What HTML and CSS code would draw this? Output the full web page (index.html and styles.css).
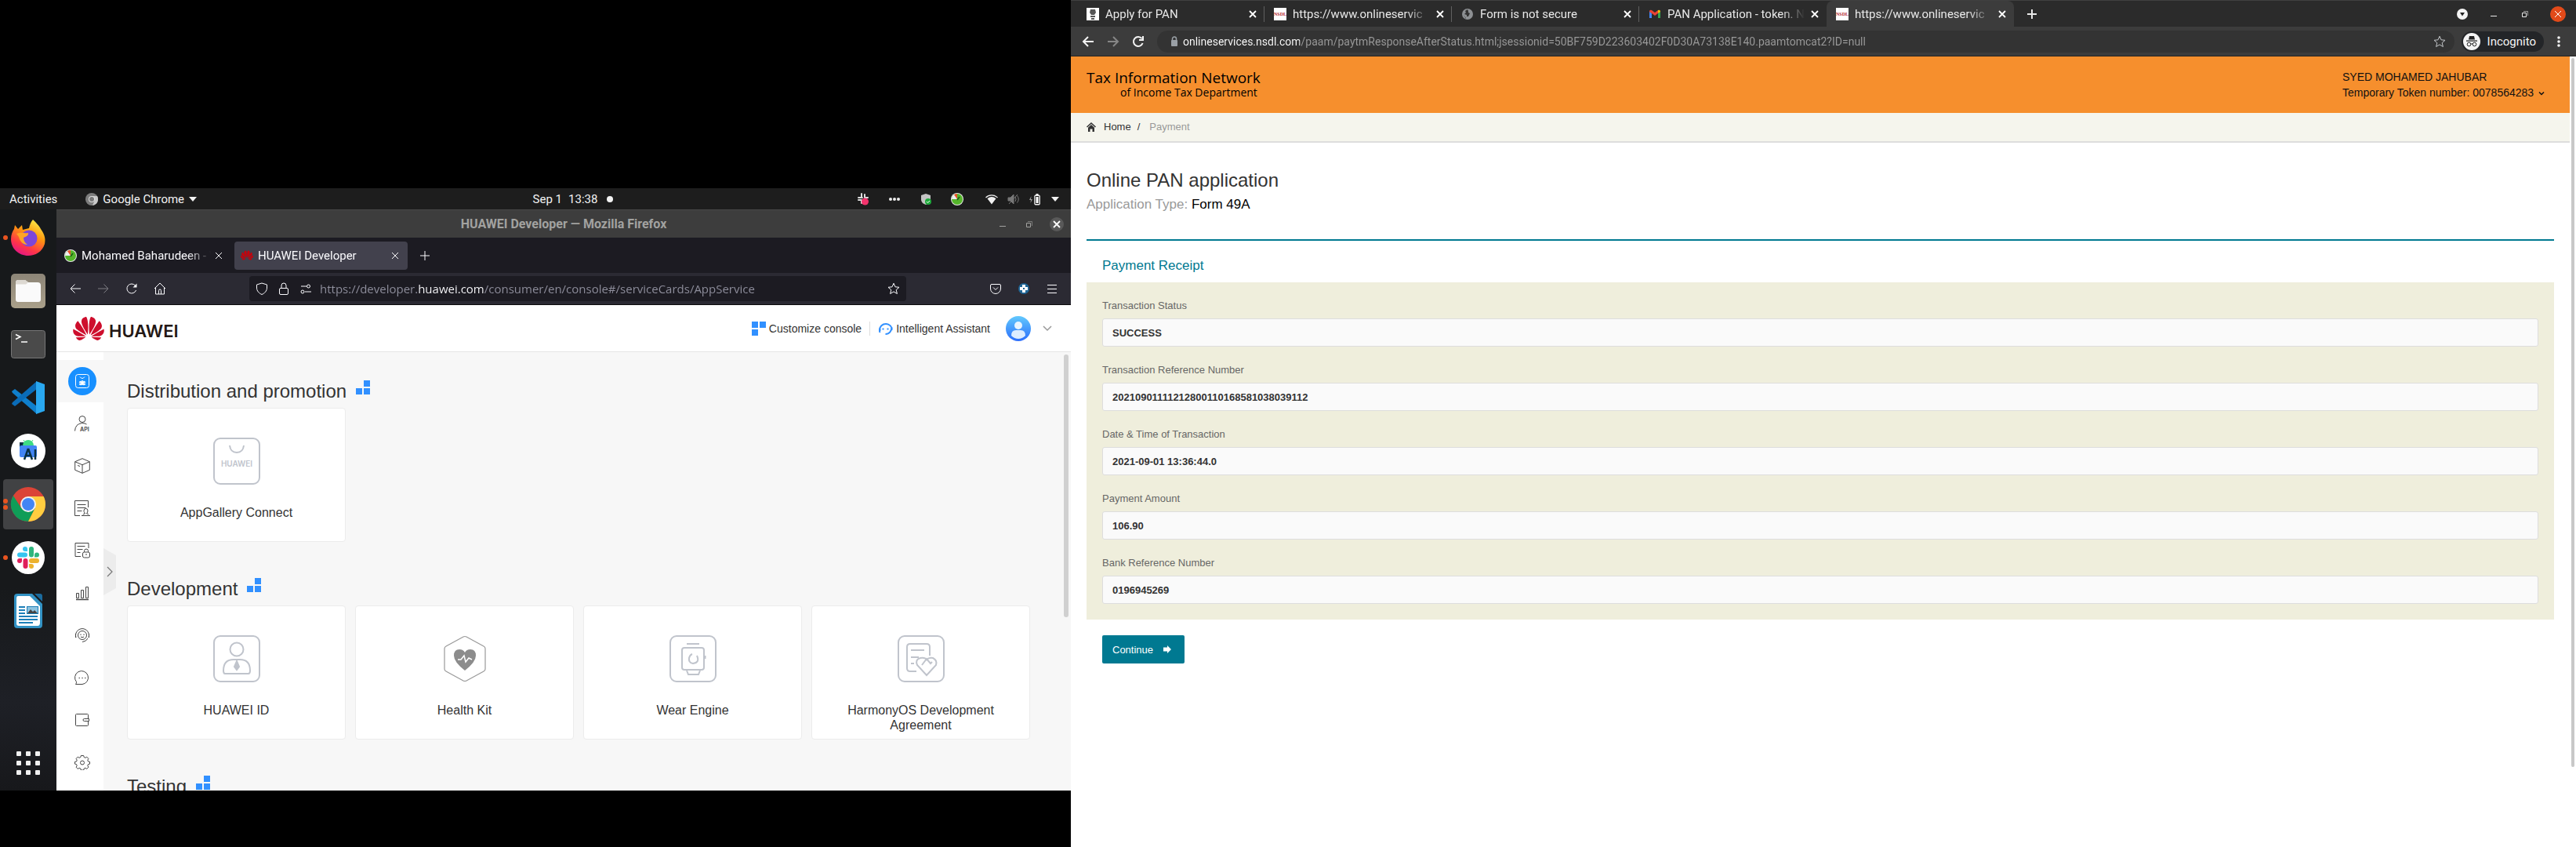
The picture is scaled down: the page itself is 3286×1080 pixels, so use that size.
FILE: index.html
```html
<!DOCTYPE html>
<html lang="en">
<head>
<meta charset="utf-8">
<title>Desktop workspace</title>
<link rel="stylesheet" href="styles.css">
</head>
<body>
<svg class="defs" aria-hidden="true">
  <defs>
    <linearGradient id="fox" x1="0.8" y1="0" x2="0.3" y2="1"><stop offset="0" stop-color="#fff44f"/><stop offset="0.4" stop-color="#ff980e"/><stop offset="0.75" stop-color="#ff3647"/><stop offset="1" stop-color="#e31587"/></linearGradient>
    <linearGradient id="files" x1="0" y1="0" x2="0" y2="1"><stop offset="0" stop-color="#8c8577"/><stop offset="1" stop-color="#aaa08a"/></linearGradient>
    <linearGradient id="avatar" x1="0" y1="0" x2="0" y2="1"><stop offset="0" stop-color="#62c9fd"/><stop offset="1" stop-color="#2b6dfb"/></linearGradient>
  </defs>
  <symbol id="i-huawei" viewBox="0 2.9 24 18.2"><path d="M3.67 6.14S1.82 7.91 1.72 9.78v.35c.08 1.51 1.22 2.4 1.22 2.4 1.83 1.79 6.26 4.04 7.3 4.55 0 0 .06.03.1-.01l.02-.04v-.04C7.52 10.8 3.67 6.14 3.67 6.14zM9.65 18.6c-.02-.08-.1-.08-.1-.08l-7.38.26c.8 1.43 2.15 2.53 3.56 2.2.96-.25 3.16-1.78 3.88-2.3.06-.05.04-.09.04-.09zm.08-.78C6.49 15.63.21 12.28.21 12.28c-.15.46-.2.9-.21 1.3v.07c0 1.07.4 1.82.4 1.82.8 1.69 2.34 2.2 2.34 2.2.7.3 1.4.31 1.4.31.12.02 4.4 0 5.54 0 .05 0 .08-.05.08-.05v-.06c0-.03-.03-.05-.03-.05zM9.06 3.19a3.42 3.42 0 00-2.57 3.15v.41c.03.6.16 1.05.16 1.05.66 2.9 3.86 7.65 4.55 8.65.05.05.1.03.1.03a.1.1 0 00.06-.1c1.06-10.6-1.11-13.42-1.11-13.42-.32.02-1.19.23-1.19.23zm8.3 2.27s-.49-1.8-2.44-2.28c0 0-.57-.14-1.17-.22 0 0-2.18 2.81-1.12 13.43.01.07.06.08.06.08.07.03.1-.03.1-.03.72-1.03 3.9-5.76 4.55-8.64 0 0 .36-1.4.02-2.34zm-2.92 13.07s-.07 0-.09.05c0 0-.01.07.03.1.7.51 2.85 2 3.88 2.3 0 0 .16.05.43.06h.14c.69-.02 1.9-.37 3-2.26l-7.4-.25zm7.83-8.41c.14-2.06-1.94-3.97-1.94-3.98 0 0-3.85 4.66-6.67 10.8 0 0-.03.08.02.13l.04.01h.06c1.06-.53 5.46-2.77 7.28-4.54 0 0 1.15-.93 1.21-2.42zm1.52 2.14s-6.28 3.37-9.52 5.55c0 0-.05.04-.03.11 0 0 .03.06.07.06 1.16 0 5.56 0 5.67-.02 0 0 .57-.02 1.27-.29 0 0 1.56-.5 2.37-2.27 0 0 .73-1.45.17-3.14z" fill="currentColor"/></symbol>
  <symbol id="i-x" viewBox="0 0 16 16"><path d="M4 4l8 8M12 4l-8 8" stroke="currentColor" fill="none"/></symbol>
  <symbol id="i-xb" viewBox="0 0 16 16"><path d="M4 4l8 8M12 4l-8 8" stroke="currentColor" stroke-width="1.800" fill="none"/></symbol>
  <symbol id="i-plus" viewBox="0 0 16 16"><path d="M8 2v12M2 8h12" stroke="currentColor" fill="none"/></symbol>
  <symbol id="i-plusb" viewBox="0 0 16 16"><path d="M8 2v12M2 8h12" stroke="currentColor" stroke-width="2" fill="none"/></symbol>
  <symbol id="i-back" viewBox="0 0 16 16"><path d="M15 8H2M7.500 2.500L2 8l5.500 5.500" stroke="currentColor" fill="none"/></symbol>
  <symbol id="i-fwd" viewBox="0 0 16 16"><path d="M1 8h13M8.500 2.500L14 8l-5.500 5.500" stroke="currentColor" fill="none"/></symbol>
  <symbol id="i-reload" viewBox="0 0 16 16"><path d="M13.600 10A6 6 0 1 1 12.600 4.200" stroke="currentColor" fill="none"/><path d="M14.500 1.500v5h-5z" fill="currentColor"/></symbol>
  <symbol id="i-star" viewBox="0 0 16 16"><path d="M8 1.200l2 4.600 5 .5-3.800 3.300 1.200 4.900L8 11.900l-4.400 2.600 1.200-4.900L1 6.300l5-.5z" stroke="currentColor" fill="none" stroke-linejoin="round"/></symbol>
  <symbol id="i-monitor" viewBox="0 0 16 16"><circle cx="8" cy="8" r="8" fill="#e9e9e9"/><circle cx="8" cy="8" r="7" fill="#55b52b"/><path d="M8 8V1a7 7 0 0 0-7 7z" fill="#eee"/><path d="M8 8V1a7 7 0 0 0-4 1.200z" fill="#e9552b"/><path d="M8 9l3-4" stroke="#1d5a14" stroke-width="1.500"/></symbol>
  <symbol id="i-blocks" viewBox="0 0 18 18"><path d="M10 0h8v8h-8zM0 10h8v8H0zM10 10h8v8h-8z" fill="#3190ff"/></symbol>
  <symbol id="i-min" viewBox="0 0 16 16"><path d="M4 10.500h8" stroke="currentColor"/></symbol>
  <symbol id="i-max" viewBox="0 0 16 16"><path d="M4.500 6.500h5v5h-5z" stroke="currentColor" fill="none"/><path d="M6 4.500h5.500V10" stroke="currentColor" opacity=".6" fill="none"/></symbol>
  <symbol id="i-slack" viewBox="0 0 28 28"><path d="M10 0a3 3 0 0 1 3 3v3h-3a3 3 0 0 1 0-6z" fill="#36c5f0"/><rect y="7.500" width="13" height="6" rx="3" fill="#36c5f0"/><path d="M28 10.500a3 3 0 0 1-3 3h-3v-3a3 3 0 0 1 6 0z" fill="#2eb67d"/><rect x="15" width="6" height="13.500" rx="3" fill="#2eb67d"/><path d="M18 28a3 3 0 0 1-3-3v-3h3a3 3 0 0 1 0 6z" fill="#ecb22e"/><rect x="15" y="15" width="13" height="6" rx="3" fill="#ecb22e"/><path d="M0 18a3 3 0 0 1 3-3h3v3a3 3 0 0 1-6 0z" fill="#e01e5a"/><rect x="7.500" y="15" width="6" height="13" rx="3" fill="#e01e5a"/></symbol>
</svg>

<div class="workspace">
  <section class="left-screen" aria-label="Left screen">
    <div class="desktop">
      <header class="topbar">
        <div class="top-left">
          <button class="bar-btn">Activities</button>
          <button class="bar-btn app-menu">
            <svg width="16" height="16" viewBox="0 0 16 16"><circle cx="8" cy="8" r="8" fill="#7d7d7d"/><path d="M8 4h7a8 8 0 0 1-6 12l2.500-6z" fill="#c9c9c9"/><circle cx="8" cy="8" r="4" fill="#ddd"/><circle cx="8" cy="8" r="3" fill="#777"/></svg>
            Google Chrome
            <svg width="10" height="6" viewBox="0 0 10 6"><path d="M0 0h10L5 6z" fill="#f2f2f2"/></svg>
          </button>
        </div>
        <button class="bar-btn clock"><span>Sep 1</span><span>13:38</span><i class="note-dot"></i></button>
        <div class="tray">
          <svg width="16" height="16" viewBox="0 0 16 16"><path d="M6 1v5M2 6h5M10 2v4M2 9h3M6 9v4M10 6h4" stroke="#ddd" stroke-width="2" stroke-linecap="round"/><circle cx="10.500" cy="11" r="4.500" fill="#f2336c"/></svg>
          <svg width="16" height="16" viewBox="0 0 16 16"><circle cx="3" cy="8" r="2" fill="#eee"/><circle cx="8" cy="8" r="2" fill="#eee"/><circle cx="13" cy="8" r="2" fill="#eee"/></svg>
          <svg width="16" height="16" viewBox="0 0 16 16"><path d="M8 1l6 2v5c0 4-3 6-6 7-3-1-6-3-6-7V3z" fill="#c4c4c4"/><circle cx="11" cy="11" r="4" fill="#1faa3c"/><path d="M9 11l1.500 1.500L13 10" stroke="#fff" fill="none"/></svg>
          <svg width="16" height="16"><use href="#i-monitor"/></svg>
          <div class="status">
            <svg width="16" height="16" viewBox="0 0 16 16"><path d="M0.500 6a10.600 10.600 0 0 1 15 0" stroke="#eee" fill="none" stroke-width="1.200"/><path d="M2.500 7.200a9 9 0 0 1 11 0L8 14.500z" fill="#f2f2f2"/></svg>
            <svg width="16" height="16" viewBox="0 0 16 16" stroke="#777" fill="none"><path d="M1 6h3l4-4v12l-4-4H1z" fill="#777"/><path d="M10 5q2 3 0 6M12.500 3.500q3.500 4.500 0 9M2 14L13 2"/></svg>
            <svg width="16" height="16" viewBox="0 0 16 16"><path d="M2.500 4L0 9h2l-.5 4L4 8H2z" fill="#999"/><rect x="6.800" y="3" width="6.500" height="12" rx="1" fill="#f2f2f2" stroke="#f2f2f2"/><rect x="8" y="4.500" width="4" height="9" fill="#fff" stroke="#1d1d1d"/><path d="M8.500 1h3v2h-3z" fill="#f2f2f2"/></svg>
            <svg width="10" height="6" viewBox="0 0 10 6"><path d="M0 0h10L5 6z" fill="#f2f2f2"/></svg>
          </div>
        </div>
      </header>

      <div class="shell">
        <nav class="dock" aria-label="Dock">
          <a href="#" class="dock-item run1" aria-label="Firefox"><svg width="46" height="46" viewBox="0 0 46 46"><path d="M29 0c6 6 8 8 10 12 6 8 6 14 5 19-3 10-12 15-21 15C11 46 1 37 1 25c0-6 2-10 4-13l1-5 4 5 5-5 1 6 8-2c1-4 2-8 5-11z" fill="url(#fox)"/><circle cx="24" cy="24" r="10.500" fill="#7d46d9"/><path d="M8 18c6-3 11 0 15-1 1 3-3 5-6 6 0 4 2 7 5 9-6 0-10-5-11-10z" fill="#ffa425"/></svg></a>
          <a href="#" class="dock-item" aria-label="Files"><svg width="46" height="46" viewBox="0 0 46 46"><rect x="1" y="1" width="44" height="44" rx="5" fill="url(#files)"/><path d="M7 13q0-4 3-4h9l4 3h12q4 0 4 4v18q0 3-3 3H10q-3 0-3-3z" fill="#fafafa"/><path d="M7 13q0-4 3-4h9l4 3-3 2.500H7z" fill="#ddd9d2"/></svg></a>
          <a href="#" class="dock-item" aria-label="Terminal"><svg width="46" height="46" viewBox="0 0 46 46"><rect x="1.500" y="5.500" width="43" height="35" rx="3" fill="#4a4a4a" stroke="#777"/><path d="M7 10.500l6 3-6 3M14 20h8" stroke="#fff" stroke-width="1.500" fill="none"/></svg></a>
          <a href="#" class="dock-item" aria-label="Visual Studio Code"><svg width="44" height="44" viewBox="0 0 44 44"><path d="M1 14l4-3 28 22v10L2 16z" fill="#0f7fcc"/><path d="M1 30l4 3 28-22V1L2 28z" fill="#0a6cb8"/><path d="M32 1l11 4v34l-11 4z" fill="#29a8f0"/></svg></a>
          <a href="#" class="dock-item" aria-label="Android Studio"><svg width="44" height="44" viewBox="0 0 44 44"><circle cx="22" cy="22" r="22" fill="#fff"/><rect x="11" y="11" width="8" height="6" fill="#073042"/><path d="M15 15a7 7 0 0 1 14 0z" fill="#3ddc84"/><path d="M16 8l2 3M28 8l-2 3" stroke="#3ddc84"/><rect x="11" y="15" width="22" height="15" rx="2" fill="#4285f4"/><path d="M22 19l-5 14M22 19l5 14M19 27q3 2 6 0M31 20v13" stroke="#073042" stroke-width="2.500" fill="none"/></svg></a>
          <a href="#" class="dock-item run2 current" aria-label="Google Chrome"><svg width="46" height="46" viewBox="1 1 46 46"><circle cx="24" cy="24" r="22" fill="#db4437"/><path d="M4.900 13A22 22 0 0 0 24 46L32.700 29 24 34 15.300 29z" fill="#0f9d58"/><path d="M24 14h19.600A22 22 0 0 1 24 46l8.700-17z" fill="#ffcd40"/><circle cx="24" cy="24" r="10" fill="#f1f1f1"/><circle cx="24" cy="24" r="8" fill="#4285f4"/></svg></a>
          <a href="#" class="dock-item run1" aria-label="Slack"><span class="disc"><svg width="28" height="28"><use href="#i-slack"/></svg></span></a>
          <a href="#" class="dock-item" aria-label="LibreOffice Writer"><svg width="46" height="46" viewBox="0 0 46 46"><path d="M9 1h19l13 13v27q0 4-4 4H9q-4 0-4-4V5q0-4 4-4z" fill="#3292c4"/><path d="M10 4h15l13 13v21q0 4-3 4H11q-3 0-3-3V7q0-3 2-3z" fill="#fff"/><path d="M31 1h7q3 0 3 3v7z" fill="#1b6b9d"/><path d="M11 18h8M11 22h8M11 26h8M11 30h24M11 34h24M11 38h18" stroke="#1c7fb8" stroke-width="2"/><rect x="21.500" y="17.500" width="14" height="9" fill="#8cc3e0" stroke="#1c7fb8"/><path d="M22 26l4-5 3 3 2-2 4 4z" fill="#444"/></svg></a>
          <button class="apps" aria-label="Show applications"><svg width="30" height="30" viewBox="0 0 30 30" fill="#f0f0f0"><rect width="6" height="6" rx="1"/><rect x="12" width="6" height="6" rx="1"/><rect x="24" width="6" height="6" rx="1"/><rect y="12" width="6" height="6" rx="1"/><rect x="12" y="12" width="6" height="6" rx="1"/><rect x="24" y="12" width="6" height="6" rx="1"/><rect y="24" width="6" height="6" rx="1"/><rect x="12" y="24" width="6" height="6" rx="1"/><rect x="24" y="24" width="6" height="6" rx="1"/></svg></button>
        </nav>

        <section class="firefox" aria-label="Firefox window">
          <div class="ff-title">
            <span class="ff-title-text">HUAWEI Developer — Mozilla Firefox</span>
            <div class="ff-controls">
              <button aria-label="Minimise"><svg width="16" height="16"><use href="#i-min"/></svg></button>
              <button aria-label="Restore"><svg width="16" height="16"><use href="#i-max"/></svg></button>
              <button class="ff-close" aria-label="Close"><svg width="16" height="16"><use href="#i-xb"/></svg></button>
            </div>
          </div>
          <div class="ff-tabs">
            <div class="ff-tab">
              <svg width="16" height="16"><use href="#i-monitor"/></svg>
              <a href="#" class="tab-name">Mohamed Baharudeen - W</a>
              <button aria-label="Close tab"><svg width="16" height="16"><use href="#i-x"/></svg></button>
            </div>
            <div class="ff-tab selected">
              <svg class="red" width="16" height="13"><use href="#i-huawei"/></svg>
              <a href="#" class="tab-name">HUAWEI Developer</a>
              <button aria-label="Close tab"><svg width="16" height="16"><use href="#i-x"/></svg></button>
            </div>
            <button class="ff-new" aria-label="New tab"><svg width="16" height="16"><use href="#i-plus"/></svg></button>
          </div>
          <div class="ff-toolbar">
            <div class="ff-nav">
              <button aria-label="Back"><svg width="16" height="16"><use href="#i-back"/></svg></button>
              <button class="off" aria-label="Forward"><svg width="16" height="16"><use href="#i-fwd"/></svg></button>
              <button aria-label="Reload"><svg width="16" height="16"><use href="#i-reload"/></svg></button>
              <button aria-label="Home"><svg width="16" height="16" viewBox="0 0 16 16" fill="none" stroke="currentColor"><path d="M1 8l7-7 7 7M2.500 7v8h11V7M6.500 15v-4.500a1.500 1.500 0 0 1 3 0V15"/></svg></button>
            </div>
            <div class="ff-url">
              <svg width="16" height="16" viewBox="0 0 16 16"><path d="M8 1l6.500 2v4c0 4-3 7-6.500 8.500C4.500 14 1.500 11 1.500 7V3z" stroke="currentColor" fill="none"/></svg>
              <svg width="16" height="16" viewBox="0 0 16 16"><path d="M5 7V4a3 3 0 0 1 6 0v3" stroke="currentColor" fill="none"/><rect x="2.500" y="7.500" width="11" height="8" rx="1.500" stroke="currentColor" fill="none"/></svg>
              <svg width="16" height="16" viewBox="0 0 16 16" stroke="currentColor" fill="none"><path d="M2 5h7M7 12h8"/><circle cx="11.500" cy="5" r="2"/><circle cx="4" cy="12" r="2"/></svg>
              <input class="ff-address" aria-label="Address" value="https://developer.huawei.com/consumer/en/console#/serviceCards/AppService">
              <button aria-label="Bookmark"><svg width="16" height="16"><use href="#i-star"/></svg></button>
            </div>
            <div class="ff-tools">
              <button aria-label="Pocket"><svg width="16" height="16" viewBox="0 0 16 16" stroke="currentColor" fill="none"><path d="M3 2.500h10q1.500 0 1.500 1.500v4a6.500 6.500 0 0 1-13 0V4q0-1.500 1.500-1.500zM5 6.500l3 3 3-3" /></svg></button>
              <button aria-label="Extension"><svg width="16" height="16" viewBox="0 0 16 16"><circle cx="8" cy="8" r="7" fill="#1f6595"/><path d="M8 3v10M3 8h10" stroke="#fff" stroke-width="4"/><path d="M7 7h2v2H7z" fill="#1f6595"/></svg></button>
              <button aria-label="Menu"><svg width="16" height="16" viewBox="0 0 16 16"><path d="M2 3.500h12M2 8.500h12M2 13.500h12" stroke="currentColor"/></svg></button>
            </div>
          </div>

          <header class="hw-header">
            <a href="#" class="hw-logo"><svg width="40" height="30"><use href="#i-huawei"/></svg><span>HUAWEI</span></a>
            <div class="hw-actions">
              <a href="#" class="hw-action"><svg width="18" height="18" viewBox="0 0 18 18"><path d="M0 0h8v8H0zM10 0h8v8h-8zM0 10h8v8H0z" fill="#3190ff"/></svg>Customize console</a>
              <a href="#" class="hw-action assist"><svg width="18" height="18" viewBox="0 0 18 18" fill="none" stroke="#3190ff" stroke-width="2"><path d="M1.500 14A8 8 0 1 1 16.500 8M16.500 7c0 5-3 9-8 9"/><path d="M5.500 8.500v2M11.500 8.500v2M1.500 9v3M16.500 8v3"/></svg>Intelligent Assistant</a>
              <button class="hw-user" aria-label="Account"><svg width="32" height="32" viewBox="0 0 32 32"><circle cx="16" cy="16" r="16" fill="url(#avatar)"/><circle cx="16" cy="12" r="5" fill="#e9f5ff"/><path d="M7 25q0-7 6-7h6q6 0 6 7-4 4-9 4t-9-4z" fill="#dcecff"/></svg><svg width="12" height="8" viewBox="0 0 12 8"><path d="M1 1l5 5 5-5" stroke="#999" stroke-width="1.500" fill="none"/></svg></button>
            </div>
          </header>

          <div class="console">
            <nav class="side" aria-label="Console">
              <a href="#" class="on" aria-label="Services"><span><svg width="20" height="20" viewBox="0 0 20 20"><rect x="1.500" y="1.500" width="17" height="17" rx="3"/><path d="M7 4.500q3 4 6 0"/><path d="M6 14l8-3M14 14l-8-3M10 15V9M7.500 15l5-5M12.500 15l-5-5" stroke-width="1.500"/></svg></span></a>
              <a href="#" aria-label="API"><svg width="20" height="20" viewBox="0 0 20 20"><circle cx="10" cy="4.500" r="4"/><path d="M.5 19.500q.5-9 9-10 4 0 6 1.500"/><text class="api" x="7" y="19.500">API</text></svg></a>
              <a href="#" aria-label="Products"><svg width="20" height="20" viewBox="0 0 20 20"><path d="M10 .7l9.300 4v10.600l-9.300 4-9.300-4V4.700zM.7 4.700l9.300 4 9.300-4M10 8.700v10.600M4 9.500l3 1"/></svg></a>
              <a href="#" aria-label="Agreements"><svg width="20" height="20" viewBox="0 0 20 20"><path d="M7 19.500H.5v-19h17V9M3.500 5.500h11M3.500 9.500h11M3.500 13.500h6M9 19.500h11M11 18.500q0-1.500 2.500-1.500-2-3-1.500-4a2.500 2.500 0 0 1 5 0q0 2-1.500 4 2.500 0 2.500 1.500"/></svg></a>
              <a href="#" aria-label="Security"><svg width="20" height="20" viewBox="0 0 20 20"><path d="M8 17.500H1v-17h17V7M3.500 4.500h10M3.500 8.500h7M3.500 12.500h4M12.500 12v-1.500a2.500 2.500 0 0 1 5 0V12"/><rect x="10.500" y="12" width="9" height="7" rx="2"/><path d="M15 14v2"/></svg></a>
              <a href="#" aria-label="Reports"><svg width="20" height="20" viewBox="0 0 20 20"><path d="M2.500 10.500h3v6h-3zM8.500 6.500h3v10h-3zM14.500 2.500h3v14h-3z"/><path d="M2 18.500h16" stroke-width="1.500"/></svg></a>
              <a href="#" aria-label="Support"><svg width="20" height="20" viewBox="0 0 20 20"><path d="M2 13A8.500 8.500 0 1 1 18 13M17 14q-2 4-7 4.500"/><circle cx="10" cy="10" r="5.500"/><path d="M8 8.500v1.500M12 8.500v1.500M8 12q2 1.500 4 0M1.500 8v5M18.500 8v5"/></svg></a>
              <a href="#" aria-label="Messages"><svg width="20" height="20" viewBox="0 0 20 20"><path d="M1.500 18.500q1-1 1-3A8.500 8.500 0 1 1 10 18.500zM5.500 10.500h1.500M9.300 10.500h1.500M13 10.500h1.500"/></svg></a>
              <a href="#" aria-label="Wallet"><svg width="20" height="20" viewBox="0 0 20 20"><rect x="1.500" y="2.500" width="16" height="15" rx="1"/><path d="M18.500 8.500h-6q-1.500 0-1.500 1.500t1.500 1.500h6z" fill="#fff"/></svg></a>
              <a href="#" aria-label="Settings"><svg width="20" height="20" viewBox="0 0 20 20"><path d="M8.300 1.500h3.400l.5 2 1.700.8 1.800-1.200 2.200 2.300-1.100 1.800.7 1.800 2 .3v2.800l-2 .5-.7 1.700 1.100 1.900-2.200 2.200-1.800-1.200-1.700.8-.5 2H8.300l-.5-2-1.700-.8-1.800 1.200-2.200-2.200 1.100-1.900-.7-1.700-2-.5V9.300l2-.3.7-1.800-1.100-1.800 2.200-2.300 1.800 1.200 1.700-.8z"/><circle cx="10" cy="10.500" r="2.500"/></svg></a>
            </nav>
            <button class="expand" aria-label="Expand menu"><svg width="16" height="60" viewBox="0 0 16 60"><path d="M0 0l16 9v42L0 60z" fill="#ececec"/><path d="M5 24l6 6-6 6" stroke="#777" stroke-width="1.200" fill="none"/></svg></button>
            <main class="catalog">
              <section class="group">
                <h2>Distribution and promotion <svg width="18" height="18"><use href="#i-blocks"/></svg></h2>
                <div class="cards">
                  <a href="#" class="card"><svg width="60" height="60" viewBox="0 0 60 60"><rect x="1" y="1" width="58" height="58" rx="8"/><path d="M21 10q1 9 9 9t9-9"/><text class="bag" x="30" y="37">HUAWEI</text></svg>AppGallery Connect</a>
                </div>
              </section>
              <section class="group">
                <h2>Development <svg width="18" height="18"><use href="#i-blocks"/></svg></h2>
                <div class="cards">
                  <a href="#" class="card"><svg width="60" height="60" viewBox="0 0 60 60"><rect x="1" y="1" width="58" height="58" rx="8"/><circle cx="30" cy="18" r="8.500"/><path d="M13 45q0-14 13-14h8q13 0 13 14 0 4-2 4H15q-2 0-2-4z"/><path d="M30 33l3 7-3 4-3-4z" fill="#c0c4cc"/></svg>HUAWEI ID</a>
                  <a href="#" class="card"><svg width="60" height="60" viewBox="0 0 60 60"><path d="M28 2q2-1 4 0l22 12q2 1 2 3v26q0 2-2 3L32 58q-2 1-4 0L6 46q-2-1-2-3V17q0-2 2-3z" stroke="#999" stroke-width="1.200"/><path d="M30 45Q16 34 16 26q0-8 7-8 5 0 7 4 2-4 7-4 7 0 7 8 0 8-14 19z" fill="#8c8c8c" stroke="none"/><path d="M21 31h4l4-5 2 8 4-5 4 2" stroke="#fff" stroke-width="1.500"/></svg>Health Kit</a>
                  <a href="#" class="card"><svg width="60" height="60" viewBox="0 0 60 60"><rect x="1" y="1" width="58" height="58" rx="8"/><path d="M22 11h16"/><rect x="16" y="16" width="28" height="28" rx="3"/><path d="M22 45l2 5h13l2-5M45.500 26v4M35 26q4 9-5 10-6-1-5-7 1-4 4-5"/></svg>Wear Engine</a>
                  <a href="#" class="card"><svg width="60" height="60" viewBox="0 0 60 60"><rect x="1" y="1" width="58" height="58" rx="8"/><path d="M41 26V15q0-4-4-4H16q-4 0-4 4v27q0 4 4 4h8M17 19h17M17 28h10M17 36h4"/><path d="M37 51L25 38q-3-7 4-9 6-1 8 2 3-3 8-2 6 3 4 9zM31 38l6-8 5 6 2-2"/></svg>HarmonyOS Development Agreement</a>
                </div>
              </section>
              <section class="group">
                <h2>Testing <svg width="18" height="18"><use href="#i-blocks"/></svg></h2>
              </section>
            </main>
            <div class="thumb"></div>
          </div>
        </section>
      </div>
    </div>
  </section>

  <section class="chrome" aria-label="Chrome window">
    <div class="c-tabs">
      <div class="c-tab">
        <svg width="16" height="16" viewBox="0 0 16 16"><path fill="#fff" d="M0 0h16v16H0z"/><path d="M5 2h6l1 4-2 3h-4L4 6zM5 10h6v2H5zM6 13h4v2H6z" fill="#555"/></svg>
        <a href="#" class="tab-name">Apply for PAN</a>
        <button aria-label="Close tab"><svg width="16" height="16"><use href="#i-xb"/></svg></button>
      </div>
      <div class="c-tab">
        <span class="nsdl">NSDL</span>
        <a href="#" class="tab-name">https://www.onlineservic</a>
        <button aria-label="Close tab"><svg width="16" height="16"><use href="#i-xb"/></svg></button>
      </div>
      <div class="c-tab">
        <svg width="16" height="16" viewBox="0 0 16 16"><circle cx="8" cy="8" r="7" fill="#8d9093"/><path d="M8 2l-3 2 1 2-2 2 3 1v2h2l2-4-2-1V4z M3 9l3 4v1z" fill="#333"/></svg>
        <a href="#" class="tab-name">Form is not secure</a>
        <button aria-label="Close tab"><svg width="16" height="16"><use href="#i-xb"/></svg></button>
      </div>
      <div class="c-tab">
        <svg width="16" height="16" viewBox="0 0 16 16"><path d="M1 4v9h3V7z" fill="#4285f4"/><path d="M15 4v9h-3V7z" fill="#34a853"/><path d="M1 4q1-2 3-1l4 3 4-3v4l-4 3-4-3-3-2z" fill="#ea4335"/><path d="M12 3q3-1 3 2l-3 2z" fill="#fbbc04"/></svg>
        <a href="#" class="tab-name">PAN Application - token. N</a>
        <button aria-label="Close tab"><svg width="16" height="16"><use href="#i-xb"/></svg></button>
      </div>
      <div class="c-tab selected">
        <span class="nsdl">NSDL</span>
        <a href="#" class="tab-name">https://www.onlineservic</a>
        <button aria-label="Close tab"><svg width="16" height="16"><use href="#i-xb"/></svg></button>
      </div>
      <button class="c-new" aria-label="New tab"><svg width="16" height="16"><use href="#i-plusb"/></svg></button>
      <div class="c-controls">
        <button aria-label="Search tabs"><svg width="16" height="16" viewBox="0 0 16 16"><circle cx="8" cy="8" r="7" fill="#f4f4f4"/><path d="M5 6h6l-3 4.500z" fill="#222"/></svg></button>
        <button aria-label="Minimise"><svg width="16" height="16"><use href="#i-min"/></svg></button>
        <button aria-label="Restore"><svg width="16" height="16"><use href="#i-max"/></svg></button>
        <button class="c-close" aria-label="Close"><svg width="16" height="16"><use href="#i-x"/></svg></button>
      </div>
    </div>
    <div class="c-toolbar">
      <button aria-label="Back"><svg class="bold" width="16" height="16" viewBox="0 0 16 16"><path d="M15 8H2M8 2L2 8l6 6"/></svg></button>
      <button class="off" aria-label="Forward"><svg class="bold" width="16" height="16" viewBox="0 0 16 16"><path d="M1 8h13M8 2l6 6-6 6"/></svg></button>
      <button aria-label="Reload"><svg class="bold" width="16" height="16" viewBox="0 0 16 16"><path d="M13.600 10A6 6 0 1 1 12.600 4.200M14 1v5H9"/></svg></button>
      <div class="c-url">
        <svg width="10" height="14" viewBox="0 0 10 14"><path d="M2.500 6V3.500a2.500 2.500 0 0 1 5 0V6" stroke="#9aa0a6" stroke-width="1.500" fill="none"/><rect x="1" y="5" width="8" height="8" rx="1" fill="#9aa0a6"/></svg>
        <input class="c-address" aria-label="Address" value="onlineservices.nsdl.com/paam/paytmResponseAfterStatus.html;jsessionid=50BF759D223603402F0D30A73138E140.paamtomcat2?ID=null">
        <button class="c-star" aria-label="Bookmark"><svg width="16" height="16"><use href="#i-star"/></svg></button>
      </div>
      <button class="incognito"><svg width="22" height="22" viewBox="0 0 22 22"><circle cx="11" cy="11" r="11" fill="#f4f4f4"/><path d="M8 4h6l1 4.500H7zM4 9.500h14v1.200H4z" fill="#222"/><g fill="none" stroke="#222"><circle cx="7.500" cy="14.500" r="2.300"/><circle cx="14.500" cy="14.500" r="2.300"/><path d="M10 14h2"/></g></svg>Incognito</button>
      <button aria-label="Menu"><svg width="16" height="16" viewBox="0 0 16 16" fill="#f4f4f4"><circle cx="8" cy="3" r="1.800"/><circle cx="8" cy="8" r="1.800"/><circle cx="8" cy="13" r="1.800"/></svg></button>
    </div>

    <div class="page">
      <div class="page-body">
        <header class="tin-header">
          <a href="#" class="tin-logo"><span class="tin-l1">Tax Information Network</span><span class="tin-l2">of Income Tax Department</span></a>
          <button class="tin-user"><span>SYED MOHAMED JAHUBAR</span><span>Temporary Token number: 0078564283 <svg width="8" height="5" viewBox="0 0 8 5"><path d="M1 .5l3 3 3-3" stroke="#111" stroke-width="1.500" fill="none"/></svg></span></button>
        </header>
        <nav class="crumbs" aria-label="Breadcrumb">
          <svg width="12" height="12" viewBox="0 0 12 12"><path d="M6 0l6 5.500-1 1L6 2 1 6.500l-1-1z" fill="#333"/><path d="M6 3l4 3.700V12H7.500V8.500h-3V12H2V6.700z" fill="#333"/></svg>
          <a href="#">Home</a><span class="sep">/</span><span class="here">Payment</span>
        </nav>
        <main class="receipt">
          <h1>Online PAN application</h1>
          <p class="kind">Application Type: <strong>Form 49A</strong></p>
          <form class="receipt-form">
            <h2>Payment Receipt</h2>
            <div class="fields">
              <label>Transaction Status<input readonly value="SUCCESS"></label>
              <label>Transaction Reference Number<input readonly value="20210901111212800110168581038039112"></label>
              <label>Date &amp; Time of Transaction<input readonly value="2021-09-01 13:36:44.0"></label>
              <label>Payment Amount<input readonly value="106.90"></label>
              <label>Bank Reference Number<input readonly value="0196945269"></label>
            </div>
            <button type="button" class="continue">Continue<svg width="10" height="10" viewBox="0 0 10 10"><path d="M0 2.500h5V0l5 5-5 5V7.500H0z" fill="#fff"/></svg></button>
          </form>
        </main>
      </div>
      <div class="scroll"><div class="scroll-thumb"></div></div>
    </div>
  </section>
</div>
</body>
</html>
```
FILE: styles.css
```css
* { box-sizing: border-box; }
body { margin: 0; font-family: "Liberation Sans", Arial, sans-serif; color: #333; background: #000; }
button { border: 0; padding: 0; margin: 0; background: none; color: inherit; font: inherit; display: flex; align-items: center; }
a { color: inherit; text-decoration: none; }
svg { display: block; flex: none; }
h1, h2, p { margin: 0; font-weight: 400; }
.defs { position: absolute; width: 0; height: 0; }

.workspace { display: grid; grid-template-columns: 1366fr 1920fr; height: 100vh; overflow: hidden; }

/* Left screen */
.left-screen { display: flex; flex-direction: column; padding: 240px 0 72px; min-width: 0; min-height: 0; }
.desktop { display: flex; flex-direction: column; flex: 1; min-height: 0; }

.topbar { display: grid; grid-template-columns: 1fr auto 1fr; height: 27px; padding: 0 15px; background: #1d1d1d; color: #f2f2f2; font: 15px/26px Roboto, sans-serif; align-items: center; }
.top-left { display: flex; gap: 36px; margin-left: -3px; }
.app-menu { gap: 6px; }
.clock { gap: 8px; padding-left: 96px; }
.clock span { white-space: nowrap; }
.note-dot { width: 8px; height: 8px; margin-left: 4px; border-radius: 50%; background: #f2f2f2; }
.tray { display: flex; justify-content: flex-end; align-items: center; gap: 24px; }
.status { display: flex; align-items: center; gap: 12px; margin-left: 4px; }

.shell { display: flex; flex: 1; min-height: 0; }
.dock { display: flex; flex-direction: column; width: 72px; flex: none; padding: 2px 4px 0; background: linear-gradient(#17191b 65%, #1e2026 85%, #17181b); }
.dock-item { position: relative; display: flex; align-items: center; justify-content: center; height: 64px; margin: 2px 0; border-radius: 4px; }
.dock-item.current { background: #414244; }
.dock-item.run1::before, .dock-item.run2::before, .dock-item.run2::after { content: ""; position: absolute; left: 0; top: 29px; width: 6px; height: 6px; border-radius: 50%; background: #e95420; }
.dock-item.run2::before { top: 25px; }
.dock-item.run2::after { top: 33px; }
.disc { display: grid; place-items: center; width: 42px; height: 42px; border-radius: 50%; background: #fff; }
.apps { justify-content: center; margin-top: auto; padding-bottom: 20px; }

/* Firefox */
.firefox { display: flex; flex-direction: column; flex: 1; min-width: 0; min-height: 0; }
.ff-title { display: grid; grid-template-columns: 1fr auto 1fr; align-items: center; height: 36px; background: #3d3d3d; border-top: 1px solid #484848; color: #a2a2a0; }
.ff-title-text { grid-column: 2; font: 700 16px/34px Roboto, sans-serif; }
.ff-controls { display: flex; justify-content: flex-end; align-items: center; gap: 18px; padding-right: 9px; }
.ff-close { width: 18px; height: 18px; justify-content: center; border-radius: 50%; background: #595959; color: #fff; }
.ff-tabs { display: flex; align-items: center; height: 45px; background: #1c1b22; color: #fbfbfe; font: 15px/20px Roboto, sans-serif; }
.ff-tab { display: flex; align-items: center; width: 221px; height: 36px; margin-right: 2px; padding: 0 8px; gap: 6px; border-radius: 4px; }
.ff-tab:first-child { width: 225px; padding: 0 10px; }
.ff-tab:first-child .tab-name { margin-right: -4px; }
.ff-tab.selected { background: #42414d; }
.red { color: #c7000b; }
.tab-name { flex: 1; min-width: 0; overflow: hidden; white-space: nowrap; mask-image: linear-gradient(90deg, #000 calc(100% - 30px), transparent); }
.ff-new { margin-left: 12px; }
.ff-toolbar { display: flex; align-items: center; height: 41px; background: #2b2a33; border-bottom: 1px solid #0c0c0d; color: #fbfbfe; }
.ff-nav { display: flex; gap: 20px; width: 246px; padding-left: 16px; }
.off { opacity: .4; }
.ff-url { display: flex; align-items: center; gap: 12px; flex: 1; max-width: 838px; height: 32px; padding: 0 8px; border-radius: 4px; background: #1c1b22; }
.ff-address, .c-address { flex: 1; min-width: 0; border: 0; padding: 0; outline: 0; color: transparent; -webkit-background-clip: text; background-clip: text; }
.ff-address { margin-left: -2px; font: 15px/20px "Open Sans", sans-serif; background-image: linear-gradient(90deg, #8f8f9d 126px, #fbfbfe 126px, #fbfbfe 209px, #8f8f9d 209px); }
.ff-tools { display: flex; justify-content: flex-end; gap: 20px; margin-left: auto; padding-right: 16px; }

/* Developer console page */
.hw-header { display: flex; justify-content: space-between; align-items: center; height: 60px; padding: 0 24px 0 21px; background: #fff; border-bottom: 1px solid #e5e5e5; }
.hw-logo { display: flex; align-items: center; gap: 6px; color: #ce0e2d; }
.hw-logo span { padding-top: 6px; color: #231815; font: 600 22px/26px Inter, sans-serif; }
.hw-actions { display: flex; align-items: center; font-size: 14px; line-height: 16px; }
.hw-action { display: flex; align-items: center; gap: 4px; }
.assist { margin-left: 10px; padding-left: 11px; border-left: 1px solid #ddd; }
.hw-user { gap: 15px; margin-left: 20px; }
.console { position: relative; display: flex; flex: 1; min-height: 0; overflow: hidden; background: #f7f7f7; }
.side { width: 60px; flex: none; padding-top: 10px; background: #fff; }
.side a { display: flex; align-items: center; justify-content: center; height: 54px; padding-left: 6px; }
.side svg { fill: none; stroke: #444; }
.side .on { background: #f7f7f7; }
.side .on span { display: grid; place-items: center; width: 36px; height: 36px; border-radius: 50%; background: #1890ff; }
.side .on svg { stroke: #fff; }
.api { font: 700 7px Inter, sans-serif; fill: #555; stroke: none; }
.expand { position: absolute; left: 60px; top: 250px; }
.catalog { flex: 1; min-width: 0; padding: 36px 52px 0 30px; }
.group { margin-bottom: 46px; }
.group h2 { display: flex; gap: 12px; margin-bottom: 7px; font-size: 24px; line-height: 28px; }
.cards { display: grid; grid-template-columns: repeat(4, 1fr); gap: 12px; }
.card { display: flex; flex-direction: column; align-items: center; gap: 26px; height: 171px; padding: 37px 30px 0; border: 1px solid #ececec; border-radius: 4px; background: #fff; font-size: 16px; line-height: 19px; text-align: center; }
.card svg { fill: none; stroke: #c0c4cc; stroke-width: 2; }
.bag { font: 600 10px Inter, sans-serif; text-anchor: middle; fill: #c0c4cc; stroke: none; }
.thumb { position: absolute; right: 3px; top: 3px; width: 6px; height: 60%; border-radius: 3px; background: #d0d0d0; }

/* Chrome */
.chrome { display: flex; flex-direction: column; min-width: 0; min-height: 0; background: #fff; }
.c-tabs { display: flex; align-items: center; height: 34px; padding-left: 8px; background: #2b2b2b; border-top: 1px solid #404040; color: #e8e8e8; font: 15px/20px Roboto, sans-serif; }
.c-tab { display: flex; align-items: center; gap: 8px; width: 239px; height: 33px; padding: 0 7px 0 12px; }
.c-tab > button { margin-left: -3px; color: #fff; }
.c-tab:nth-child(-n+3) { background: linear-gradient(#606060, #606060) right center / 1px 20px no-repeat; }
.c-tab.selected { border-radius: 8px 8px 0 0; background: #3c3c3c; }
.nsdl { width: 16px; height: 16px; background: #fff; color: #b3262e; font: 700 6px/16px "Liberation Serif", serif; text-align: center; }
.c-new { margin-left: 15px; }
.c-controls { display: flex; align-items: center; gap: 24px; margin-left: auto; padding-right: 13px; }
.c-close { width: 20px; height: 20px; justify-content: center; border-radius: 50%; background: #e24a19; color: #fff; }
.c-toolbar { display: flex; align-items: center; gap: 16px; height: 38px; padding: 0 14px; background: #3c3c3c; border-bottom: 1px solid #222; color: #f4f4f4; }
.bold { fill: none; stroke: currentColor; stroke-width: 2; }
.c-url { display: flex; align-items: center; flex: 1; height: 28px; margin-right: -7px; padding: 0 11px 0 17px; border-radius: 14px; background: #333; gap: 6px; }
.c-address { font: 14px/20px Roboto, sans-serif; background-image: linear-gradient(90deg, #fff 149px, #9a9a9a 149px); }
.c-star { color: #c4c7ca; }
.incognito { gap: 9px; height: 26px; padding: 0 10px 0 2px; margin-right: -5px; border-radius: 13px; background: #232528; font: 15px/26px Roboto, sans-serif; }

/* Tax portal page */
.page { display: flex; flex: 1; min-height: 0; }
.page-body { flex: 1; min-width: 0; }
.tin-header { display: flex; justify-content: space-between; align-items: center; height: 72px; padding: 0 32px 0 20px; background: #f68f2d; color: #111; }
.tin-logo { display: flex; flex-direction: column; align-items: flex-end; font-family: "Open Sans", sans-serif; color: #000; }
.tin-l1 { font-size: 19px; line-height: 20px; }
.tin-l2 { padding-right: 4px; font-size: 14px; line-height: 18px; }
.tin-user { flex-direction: column; align-items: flex-start; font-size: 14px; line-height: 20px; }
.tin-user svg { display: inline-block; vertical-align: middle; margin-left: 2px; }
.crumbs { display: flex; align-items: center; height: 38px; border-bottom: 2px solid #ddd; padding: 0 20px; background: #f5f5ed; font-size: 13px; line-height: 16px; }
.crumbs a { margin-left: 10px; }
.sep { margin-left: 8px; }
.here { margin-left: 12px; color: #999; }
.receipt { padding: 34px 20px 0; }
h1 { font-size: 24px; line-height: 28px; }
.kind { margin: 7px 0 34px; font-size: 17px; line-height: 20px; color: #999; }
.kind strong { font-weight: 400; color: #000; }
.receipt-form { border-top: 2px solid #007991; }
.receipt-form h2 { padding: 22px 20px 11px; font-size: 17px; line-height: 20px; color: #007991; }
.fields { display: flex; flex-direction: column; gap: 22px; padding: 22px 20px 20px; background: #efeedc; }
.fields label { display: flex; flex-direction: column; gap: 8px; font-size: 13px; line-height: 16px; color: #666; }
.fields input { height: 36px; padding: 0 12px; border: 1px solid #ddd; border-radius: 3px; background: #fafafa; color: #333; font: 700 13px/16px "Liberation Sans", Arial, sans-serif; }
.continue { gap: 13px; height: 36px; margin: 20px; padding: 0 17px 0 13px; border-radius: 2px; background: #007991; color: #fff; font-size: 13px; }
.scroll { width: 8px; padding: 2px; background: #fff; }
.scroll-thumb { width: 4px; height: 90%; border-radius: 2px; background: #c8c8c8; }
```
